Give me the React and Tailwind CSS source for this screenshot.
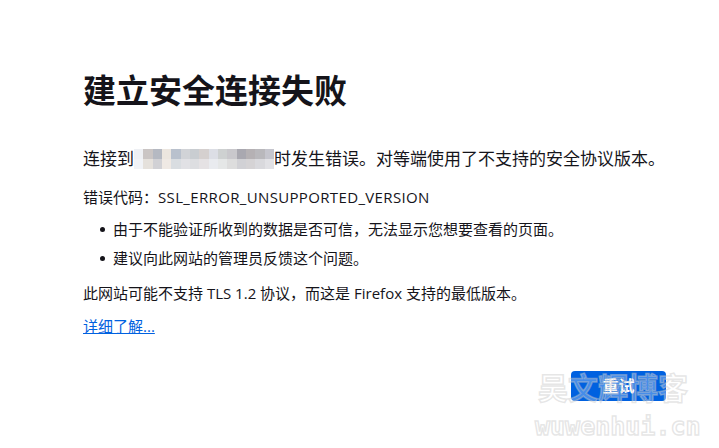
import React from "react";

const blurTop = [
  "#eef0f4", "#cac5c4", "#b5b9c2", "#ece6df", "#b9c1cd", "#d1d3d7", "#c9cdd1", "#d5d0cf",
  "#dcdee5", "#ced1d1", "#c9c8cc", "#a9a8b0", "#b5b1b4", "#b9b8bc", "#c5c5cd",
];
const blurBottom = [
  "#f1f3f7", "#e5e1dc", "#d1d1d5", "#efe9e4", "#d9dde1", "#e1e1e5", "#dddee1", "#e5e2e4",
  "#e9ebef", "#e5e7e7", "#dddddd", "#d1d1d5", "#d5d3d5", "#d9d9dd", "#e1e1e5",
];

const BlurredHost = () => (
  <span className="inline-flex flex-col align-middle w-[140px] h-[20px]">
    <span className="flex h-[10px]">
      {blurTop.map((c, i) => (
        <span key={i} className="flex-1 h-full" style={{ backgroundColor: c }} />
      ))}
    </span>
    <span className="flex h-[10px]">
      {blurBottom.map((c, i) => (
        <span key={i} className="flex-1 h-full" style={{ backgroundColor: c }} />
      ))}
    </span>
  </span>
);

const Bullet = ({ children }) => (
  <li className="flex items-center h-[22px]">
    <span className="ml-[17px] mr-[8px] w-[5px] h-[5px] rounded-full bg-[#15141a]" />
    <span>{children}</span>
  </li>
);

export default function App() {
  return (
    <div className="relative w-[719px] h-[448px] bg-white overflow-hidden text-[#15141a] font-['Open_Sans','Noto_Sans_CJK_SC',sans-serif]">
      <div className="flex flex-col w-[583px] ml-[83px] pt-[71px]">
        <h1 className="text-[33px] leading-[40px] font-bold">建立安全连接失败</h1>

        <p className="mt-[35px] text-[17px] leading-[26px] flex items-center">
          <span>连接到</span>
          <BlurredHost />
          <span>时发生错误。对等端使用了不支持的安全协议版本。</span>
        </p>

        <p className="mt-[14px] text-[15px] leading-[22px]">
          错误代码：<span className="tracking-[0.35px]">SSL_ERROR_UNSUPPORTED_VERSION</span>
        </p>

        <ul className="mt-[10px] text-[15px] flex flex-col gap-[7px]">
          <Bullet>由于不能验证所收到的数据是否可信，无法显示您想要查看的页面。</Bullet>
          <Bullet>建议向此网站的管理员反馈这个问题。</Bullet>
        </ul>

        <p className="mt-[13px] text-[15px] leading-[22px]">此网站可能不支持 TLS 1.2 协议，而这是 Firefox 支持的最低版本。</p>

        <a href="#" className="mt-[11px] text-[15px] leading-[22px] text-[#0061e0] underline self-start">
          详细了解...
        </a>

        <button className="self-end mt-[34px] w-[95px] h-[30px] rounded-[4px] bg-[#0061e0] text-white text-[16px] font-bold">
          重试
        </button>
      </div>

      <div className="absolute left-[538px] top-[366px] pointer-events-none select-none flex flex-col items-start">
        <span className="text-[30px] leading-[40px] font-bold text-[rgba(255,255,255,0.3)] [-webkit-text-stroke:1.5px_rgba(200,200,200,0.45)] font-['Noto_Sans_CJK_SC',sans-serif]">
          吴文辉博客
        </span>
        <span className="mt-[6px] -ml-[3px] text-[25px] leading-[30px] font-bold text-[rgba(255,255,255,0.3)] [-webkit-text-stroke:1.5px_rgba(200,200,200,0.45)] font-['DejaVu_Sans_Mono',monospace]">
          wuwenhui.cn
        </span>
      </div>
    </div>
  );
}
